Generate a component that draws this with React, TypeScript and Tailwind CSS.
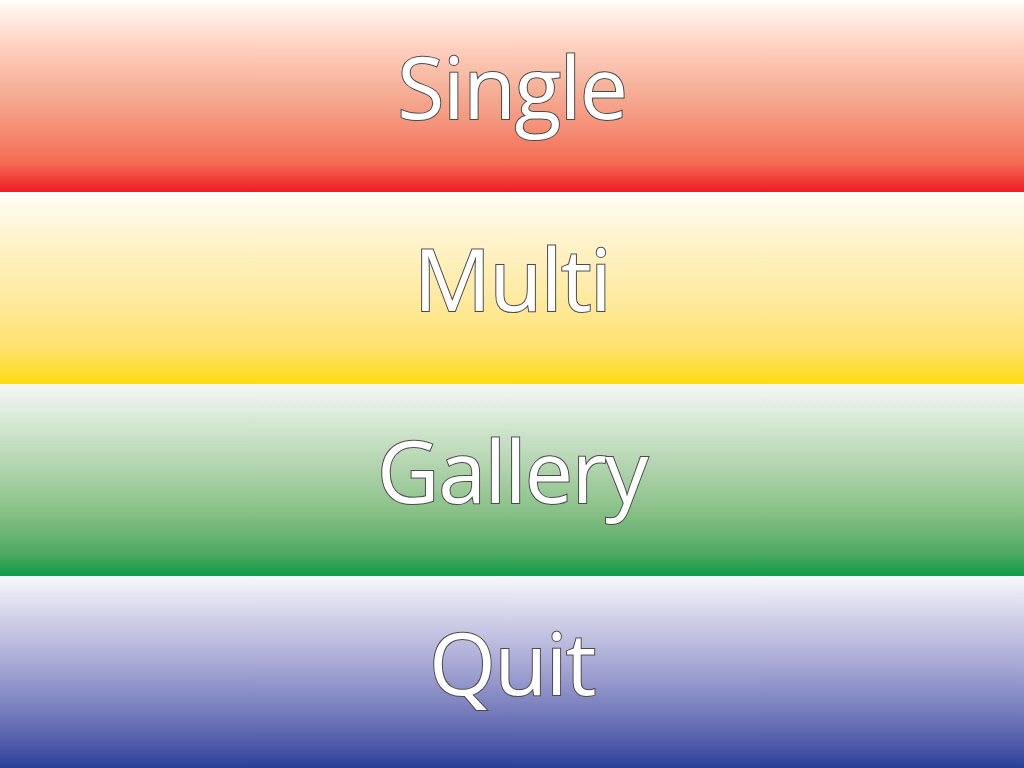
const bands = [
  { label: "Single", bg: "bg-[linear-gradient(to_bottom,#fffcf9_0%,#ffd4c4_22%,#f6b29a_45%,#f5927a_65%,#f46a52_85%,#ee1c25_100%)]" },
  { label: "Multi", bg: "bg-[linear-gradient(to_bottom,#fffef8_0%,#fff3cc_25%,#feeaa0_55%,#fee270_80%,#ffdb12_100%)]" },
  { label: "Gallery", bg: "bg-[linear-gradient(to_bottom,#f5f8f5_0%,#d2e5d0_22%,#aed2aa_45%,#85bf84_68%,#4eaa62_88%,#0e9d48_100%)]" },
  { label: "Quit", bg: "bg-[linear-gradient(to_bottom,#f7f7fc_0%,#d4d4ea_20%,#a9aad6_45%,#7c81be_68%,#4f5aa8_88%,#2a3e98_100%)]" },
]

export default function App() {
  return (
    <div className="flex flex-col w-[1024px] h-[768px] overflow-hidden">
      {bands.map((b) => (
        <button
          key={b.label}
          className={`h-[192px] w-full flex items-center justify-center pb-5 ${b.bg}`}
        >
          <span className="font-['Open_Sans',sans-serif] text-[86px] leading-none text-white tracking-[-1.5px] [-webkit-text-stroke:2px_#4a4a4a] [paint-order:stroke_fill]">
            {b.label}
          </span>
        </button>
      ))}
    </div>
  )
}
